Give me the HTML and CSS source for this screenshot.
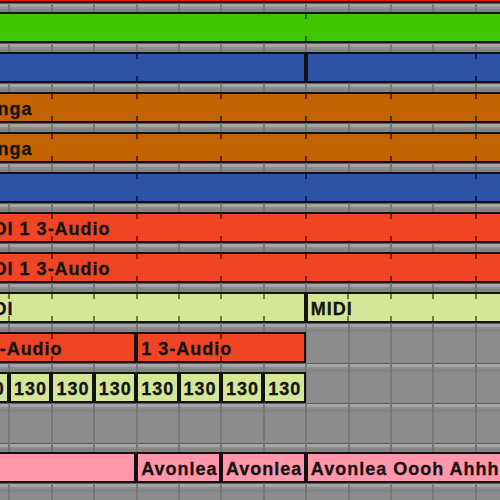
FILE: index.html
```html
<!DOCTYPE html>
<html>
<head>
<meta charset="utf-8">
<link rel="stylesheet" href="styles.css">
</head>
<body>
<div class="arr">
  <div class="lane"><div class="clip c-red u16"></div></div>
  <div class="lane"><div class="clip c-green tk t8 u16"></div></div>
  <div class="lane"><div class="clip c-blue tk t4 u8"></div><div class="clip c-blue tk t4 u8"></div></div>
  <div class="lane"><div class="clip c-orange tk t2 u16">Conga</div></div>
  <div class="lane"><div class="clip c-orange tk t2 u16">Conga</div></div>
  <div class="lane"><div class="clip c-blue tk t4 u16"></div></div>
  <div class="lane"><div class="clip c-audio tk t2 u16">MIDI 1 3-Audio</div></div>
  <div class="lane"><div class="clip c-audio tk t2 u16">MIDI 1 3-Audio</div></div>
  <div class="lane"><div class="clip c-lime tk t1 u8">MIDI</div><div class="clip c-lime tk t1 u8">MIDI</div></div>
  <div class="lane"><div class="clip c-audio tk t2 u4">1 3-Audio</div><div class="clip c-audio tk t2 u4">1 3-Audio</div></div>
  <div class="lane">
    <div class="clip c-lime u1">130</div>
    <div class="clip c-lime u1">130</div>
    <div class="clip c-lime u1">130</div>
    <div class="clip c-lime u1">130</div>
    <div class="clip c-lime u1">130</div>
    <div class="clip c-lime u1">130</div>
    <div class="clip c-lime u1">130</div>
    <div class="clip c-lime u1">130</div>
  </div>
  <div class="lane"></div>
  <div class="lane"><div class="clip c-pink pre u8">Avonlea</div><div class="clip c-pink u2">Avonlea</div><div class="clip c-pink u2">Avonlea</div><div class="clip c-pink u8">Avonlea Oooh Ahhh</div></div>
  <div class="lane"></div>
</div>
</body>
</html>
```
FILE: styles.css
```css
html, body {
  margin: 0;
  padding: 0;
  background: #8c8c8c;
  overflow: hidden;
  width: 500px;
  height: 500px;
}

.arr {
  margin-top: -37px;
  margin-left: -33.4px;
  width: 760px;
}

.lane {
  box-sizing: border-box;
  height: 40px;
  padding-top: 9px;
  display: flex;
  background-image:
    repeating-linear-gradient(90deg, #777 0 1px, transparent 1px 41.4px, #777 41.4px 42.4px),
    linear-gradient(#5e5e5e 0 1px, #a6a6a6 1px 4px, #8c8c8c 4px 6px, #848484 6px 9px, #8c8c8c 9px);
}

.clip {
  flex: none;
  box-sizing: border-box;
  height: 31px;
  border: 2px solid #121212;
  padding: 2px 0 0 3px;
  font: bold 18px/26px "Liberation Sans", Arial, sans-serif;
  letter-spacing: 1px;
  color: #141414;
  -webkit-text-stroke: 0.3px #141414;
  white-space: nowrap;
  overflow: hidden;
  background-repeat: no-repeat;
  background-size: 100% 5px;
  background-position: 0 0, 0 100%;
}

.tk {
  background-image:
    repeating-linear-gradient(90deg, transparent 0 calc(var(--p) - 3px), var(--tk) calc(var(--p) - 3px) calc(var(--p) - 1px), transparent calc(var(--p) - 1px) var(--p)),
    repeating-linear-gradient(90deg, transparent 0 calc(var(--p) - 3px), var(--tk) calc(var(--p) - 3px) calc(var(--p) - 1px), transparent calc(var(--p) - 1px) var(--p));
}

.t1 { --p: 42.4px; }
.t2 { --p: 84.8px; }
.t4 { --p: 169.6px; }
.t8 { --p: 339.2px; }

.u1 { width: 42.4px; }
.u2 { width: 84.8px; }
.u4 { width: 169.6px; }
.u8 { width: 339.2px; }
.u16 { width: 678.4px; }

.pre { margin-left: -169.6px; }

.c-red { background-color: #f80c0c; }
.c-green { background-color: #3fc600; --tk: #1f6a00; }
.c-blue { background-color: #2e52a6; --tk: #0c1d5a; }
.c-orange { background-color: #c26200; --tk: #5e2200; }
.c-audio { background-color: #ef4524; --tk: #8a1a08; }
.c-lime { background-color: #d6e698; --tk: #6f7c30; }
.c-pink { background-color: #ff96aa; }
```
